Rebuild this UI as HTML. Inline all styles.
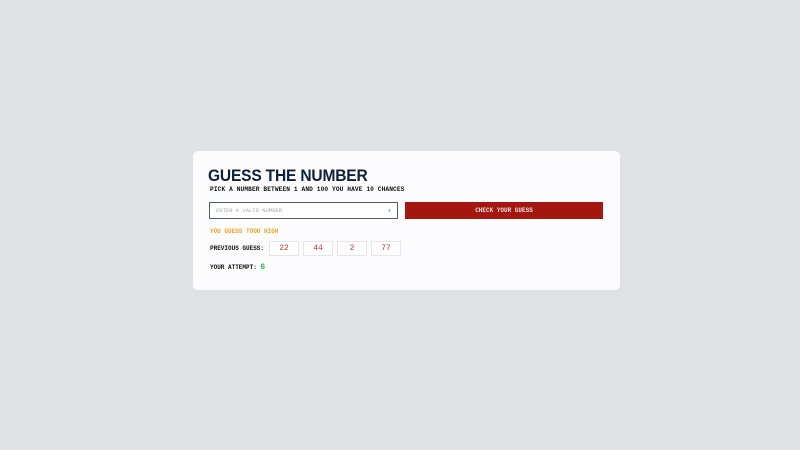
<!DOCTYPE html>
<html><head><style>
body{margin:0;width:800px;height:450px;background:#e0e1e5;font-family:"Liberation Mono",monospace;position:relative;overflow:hidden}
.card{position:absolute;left:193px;top:151px;width:427px;height:139px;background:#fcfbfd;border-radius:5px}
h1{position:absolute;left:15px;top:15px;margin:0;font-family:"Liberation Sans",sans-serif;font-weight:900;font-size:17px;line-height:20px;color:#0f1f3a;letter-spacing:-0.2px;transform:scaleX(0.915);transform-origin:left}
.sub{position:absolute;left:17px;top:35px;font-size:6.2px;font-weight:bold;color:#111;letter-spacing:0.1px}
.inp{position:absolute;left:16px;top:51px;width:181px;height:15px;border:1px solid #555b66;background:#fff;font-size:5.5px;color:#aaa;line-height:15px;padding-left:6px}
.btn{position:absolute;left:212px;top:51px;width:198px;height:17px;background:#a3170f;color:#f1dcdc;font-size:6px;font-weight:bold;text-align:center;line-height:17px}
.msg{position:absolute;left:17px;top:77px;font-size:6px;font-weight:bold;color:#f0a020}
.prev{position:absolute;left:17px;top:94px;font-size:6px;font-weight:bold;color:#111}
.b{position:absolute;top:90px;width:28px;height:13px;border:1px solid #e6e6ea;background:#fff;color:#c0392b;font-size:8px;text-align:center;line-height:13px}
.att{position:absolute;left:17px;top:112px;font-size:6px;font-weight:bold;color:#111}
.att span{color:#2ab450;font-size:8px}
</style></head><body>
<div class="card">
<h1>GUESS THE NUMBER</h1>
<div class="sub">PICK A NUMBER BETWEEN 1 AND 100 YOU HAVE 10 CHANCES</div>
<div class="inp">ENTER A VALID NUMBER<span style="position:absolute;right:6px;color:#555">⇕</span></div>
<div class="btn">CHECK YOUR GUESS</div>
<div class="msg">YOU GUESS TOOO HIGH</div>
<div class="prev">PREVIOUS GUESS:</div>
<div class="b" style="left:76px">22</div>
<div class="b" style="left:110px">44</div>
<div class="b" style="left:144px">2</div>
<div class="b" style="left:178px">77</div>
<div class="att">YOUR ATTEMPT: <span>6</span></div>
</div>
</body></html>
